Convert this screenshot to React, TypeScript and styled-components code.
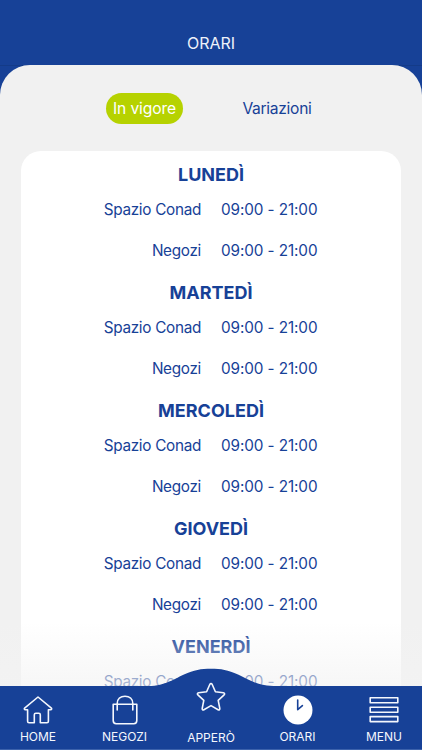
import React from 'react';
import styled, { createGlobalStyle } from 'styled-components';

const blue = '#174197';

const GlobalStyle = createGlobalStyle`
  * { box-sizing: border-box; }
  html, body, #root { height: 100%; margin: 0; }
  body { overflow: hidden; background: ${blue}; }
`;

const Screen = styled.div`
  display: flex;
  flex-direction: column;
  height: 100%;
  color: ${blue};
  background: ${blue};
  font-family: Inter, 'Liberation Sans', sans-serif;
`;

const Header = styled.header`
  flex: none;
  display: flex;
  justify-content: center;
  height: 66px;
  padding-top: 33px;
  border-bottom: 1px solid #143b88;
  color: #edf1fa;
`;

const Title = styled.h1`
  margin: 0;
  font-size: 16px;
  font-weight: 400;
  line-height: 20px;
  letter-spacing: -0.05px;
`;

const Panel = styled.main`
  flex: 1;
  min-height: 0;
  display: flex;
  flex-direction: column;
  margin-top: -1px;
  padding: 28px 21px 0;
  border-radius: 30px 30px 0 0;
  background: #f1f1f1;
  overflow: hidden;
`;

const Tabs = styled.div`
  flex: none;
  display: grid;
  grid-template-columns: 77px 70px;
  column-gap: 59px;
  height: 30px;
  margin: 0 0 28px 85px;
`;

const Tab = styled.button<{ $active?: boolean }>`
  height: 31px;
  padding: 0;
  border: 0;
  border-radius: 16px;
  color: ${(p) => (p.$active ? '#fff' : blue)};
  background: ${(p) => (p.$active ? '#b6d200' : 'transparent')};
  font: 400 15.6px/31px Inter, 'Liberation Sans', sans-serif;
  letter-spacing: ${(p) => (p.$active ? '-0.1px' : '-0.3px')};
  white-space: nowrap;
`;

const Card = styled.section`
  flex: 1;
  min-height: 0;
  padding-top: 2px;
  border-radius: 20px 20px 0 0;
  background: #fff;
  overflow: hidden;
`;

const DayBlock = styled.article`
  height: 118px;
`;

const DayName = styled.h2`
  height: 36px;
  margin: 0;
  font-size: 18px;
  font-weight: 700;
  line-height: 43px;
  text-align: center;
`;

const HoursRow = styled.div`
  display: grid;
  grid-template-columns: 180px 1fr;
  column-gap: 20px;
  height: 41px;
  font-size: 15.3px;
  line-height: 41px;
`;

const Place = styled.span`
  text-align: right;
  letter-spacing: -0.3px;
`;

const Hours = styled.span`
  letter-spacing: -0.1px;
`;

const NavBar = styled.nav`
  flex: none;
  position: relative;
  display: grid;
  grid-template-columns: 76px 97px 76px 97px 76px;
  height: 64px;
  color: #f4f7fd;
  background: ${blue};
  border-bottom: 1px solid #3c62ac;
`;

const BottomFade = styled.div`
  position: absolute;
  left: 0;
  right: 0;
  bottom: 100%;
  height: 64px;
  background: linear-gradient(rgba(243, 243, 243, 0), rgba(243, 243, 243, 0.68));
`;

const Bump = styled.svg`
  position: absolute;
  left: 145px;
  top: -18px;
  width: 132px;
  height: 19px;
`;

const NavItem = styled.button<{ $raised?: boolean }>`
  position: relative;
  display: flex;
  flex-direction: column;
  align-items: center;
  justify-content: space-between;
  margin-top: ${(p) => (p.$raised ? '-4px' : '9px')};
  margin-bottom: ${(p) => (p.$raised ? '4px' : '5px')};
  padding: 0;
  border: 0;
  background: none;
  color: inherit;
  font: 400 12px/14px Inter, 'Liberation Sans', sans-serif;

  svg {
    display: block;
    fill: none;
    stroke: currentColor;
    stroke-width: 1.6;
    stroke-linejoin: round;
    stroke-linecap: round;
  }
`;

const HomeIcon = () => (
  <svg width="30" height="30" viewBox="0 0 30 30">
    <path d="M15 2 1.600 13.100c-.6.6-.2 1.600.7 1.600h2.300v11.600c0 .9.6 1.400 1.400 1.400h5.300v-8c0-1 .6-1.500 1.500-1.500h3c.9 0 1.500.5 1.500 1.500v8H24c.8 0 1.400-.5 1.400-1.400V14.700h2.300c.9 0 1.300-1 .7-1.600L15 2Z" />
  </svg>
);

const BagIcon = () => (
  <svg width="26" height="30" viewBox="0 0 26 30">
    <path d="M1.200 9.300h23.600v16.200c0 2-1 3.200-3 3.200H4.200c-2 0-3-1.200-3-3.200ZM5.200 15V8.600C5.200 4 8.500 1.200 13 1.200S20.800 4 20.800 8.600V15" />
  </svg>
);

const StarIcon = () => (
  <svg width="30" height="30" viewBox="0 0 30 30">
    <path d="M13.900 2.300c.5-1 1.700-1 2.200 0l3.300 7.500 8 .9c1.200.2 1.600 1.300.7 2.100l-5.900 5.600 1.600 8.100c.2 1.200-.7 1.800-1.700 1.200L15 23.600l-7.100 4.100c-1 .6-1.900 0-1.700-1.200l1.600-8.100-5.900-5.600c-.9-.8-.5-1.900.7-2.100l8-.9Z" />
  </svg>
);

const ClockFace = styled.circle`
  fill: #fff;
  stroke: none;
`;

const ClockHands = styled.path`
  stroke: ${blue};
`;

const ClockIcon = () => (
  <svg width="30" height="30" viewBox="0 0 30 30">
    <ClockFace cx="15" cy="15" r="14.5" />
    <ClockHands d="M14.700 5v9.700l4.700-4.100" />
  </svg>
);

const MenuIcon = () => (
  <svg width="30" height="30" viewBox="0 0 30 30">
    <path d="M1.200 2.800h27.600v5H1.200ZM1.200 12.300h27.600v5H1.200ZM1.200 21.600h27.600v5H1.200Z" />
  </svg>
);

const openings = [
  { place: 'Spazio Conad', hours: '09:00 - 21:00' },
  { place: 'Negozi', hours: '09:00 - 21:00' },
];
const days = [
  { name: 'LUNEDÌ', rows: openings },
  { name: 'MARTEDÌ', rows: openings },
  { name: 'MERCOLEDÌ', rows: openings },
  { name: 'GIOVEDÌ', rows: openings },
  { name: 'VENERDÌ', rows: openings.slice(0, 1) },
];
const navItems = [
  { label: 'HOME', Icon: HomeIcon },
  { label: 'NEGOZI', Icon: BagIcon },
  { label: 'APPERÒ', Icon: StarIcon, raised: true },
  { label: 'ORARI', Icon: ClockIcon },
  { label: 'MENU', Icon: MenuIcon },
];

export default function App() {
  return (
    <>
      <GlobalStyle />
      <Screen>
        <Header>
          <Title>ORARI</Title>
        </Header>
        <Panel>
          <Tabs>
            <Tab $active>In vigore</Tab>
            <Tab>Variazioni</Tab>
          </Tabs>
          <Card>
            {days.map(({ name, rows }) => (
              <DayBlock key={name}>
                <DayName>{name}</DayName>
                {rows.map((o) => (
                  <HoursRow key={o.place}>
                    <Place>{o.place}</Place>
                    <Hours>{o.hours}</Hours>
                  </HoursRow>
                ))}
              </DayBlock>
            ))}
          </Card>
        </Panel>
        <NavBar>
          <BottomFade />
          <Bump viewBox="0 0 132 19">
            <path
              d="M0 18.300C19 18.300 27 12 39 6.500C49 2 56 .8 66 .8S83 2 93 6.500C105 12 113 18.300 132 18.300V19H0Z"
              fill={blue}
            />
          </Bump>
          {navItems.map(({ label, Icon, raised }) => (
            <NavItem key={label} $raised={raised}>
              <Icon />
              {label}
            </NavItem>
          ))}
        </NavBar>
      </Screen>
    </>
  );
}
